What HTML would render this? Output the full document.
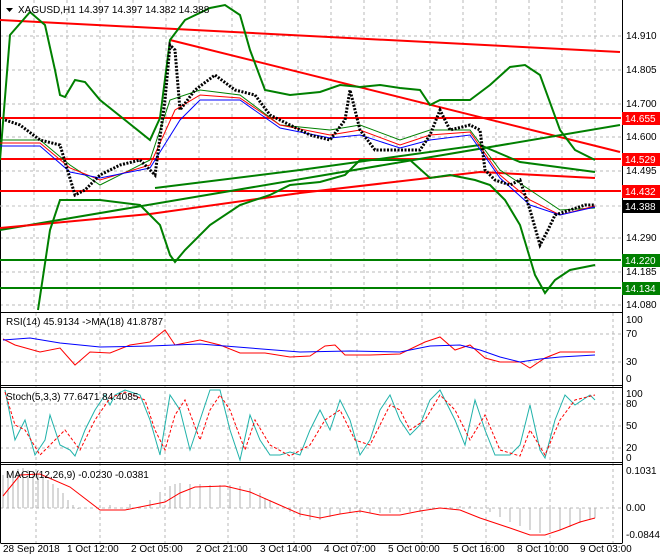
<!DOCTYPE html>
<html><head><meta charset="utf-8"><style>
body{margin:0;background:#fff;}
svg{display:block;font-family:"Liberation Sans",sans-serif;font-size:10px;}
</style></head><body>
<svg width="660" height="560" viewBox="0 0 660 560" xmlns="http://www.w3.org/2000/svg">
<rect width="660" height="560" fill="#fff"/>
<g stroke="#b8b8b8" stroke-dasharray="3,3" stroke-width="1">
<path d="M34 0V312M67 0V312M100 0V312M133 0V312M166 0V312M199 0V312M232 0V312M265 0V312M298 0V312M331 0V312M364 0V312M397 0V312M430 0V312M463 0V312M496 0V312M529 0V312M562 0V312M595 0V312"/>
<path d="M0 36H621M0 70H621M0 104H621M0 137H621M0 171H621M0 238H621M0 272H621M0 305H621"/>
<path d="M36 313V543M100 313V543M165 313V543M228 313V543M294 313V543M357 313V543M422 313V543M486 313V543M550 313V543M613 313V543"/>
<path d="M0 334H621M0 362H621M0 404H621M0 426H621M0 448H621M0 508H621"/>
</g>
<g fill="none" stroke="#000" stroke-width="1">
<path d="M0.5 312.5H622.5M0.5 385.5H622.5M0.5 387.5H622.5M0.5 462.5H622.5M0.5 464.5H622.5M0.5 543.5H622.5M622.5 0V543M0.5 0V543"/>
</g>
<g stroke-width="2" fill="none">
<path d="M0 118H621M0 159H621M0 191H621" stroke="#f00"/>
<path d="M0 260H621M0 288H621" stroke="#008000"/>
<path d="M0 206H621" stroke="#c0c0c0" stroke-width="1" stroke-dasharray="3,3"/>
<path d="M0 20L620 52" stroke="#f00"/>
<path d="M170 40L620 152" stroke="#f00"/>
<path d="M0 230L620 125" stroke="#008000"/>
<path d="M0 228L150 214L300 193L480 172L595 178" stroke="#f00"/>
<path d="M155 188L300 170L480 145L520 162L595 172" stroke="#008000"/>
<path d="M0 160L10 35L30 12L45 25L55 70L60 95L65 97L75 80L85 82L100 100L125 120L150 140L160 118L170 40L185 20L210 8L225 5L240 15L250 50L265 90L290 95L320 92L340 85L360 87L380 85L400 88L420 90L430 105L440 100L470 100L490 85L510 67L525 65L540 75L560 130L575 150L595 160" stroke="#008000"/>
<path d="M38 310L50 230L60 200L75 200L100 200L140 205L160 225L170 255L175 262L185 250L210 225L240 205L270 195L290 185L320 182L345 175L360 160L380 160L410 160L430 178L450 175L475 180L490 185L505 200L520 225L535 275L545 293L555 280L570 270L595 265" stroke="#008000"/>
<path d="M0 140L40 140L70 165L100 185L150 160L170 100L200 90L240 95L280 125L330 130L360 125L400 140L430 130L470 130L500 170L530 190L560 210L595 208" stroke="#008000" stroke-width="1"/>
<path d="M0 143L40 143L70 168L100 180L150 165L175 110L200 95L240 98L280 125L330 135L360 130L400 145L430 135L470 132L500 175L530 200L560 215L595 206" stroke="#f00" stroke-width="1"/>
<path d="M0 146L40 146L70 172L100 178L150 168L180 120L200 100L240 100L280 128L330 138L360 135L400 148L430 140L470 135L500 178L530 205L560 215L595 207" stroke="#00f" stroke-width="1"/>
<path d="M5 120L20 125L40 140L60 145L75 195L85 190L100 175L120 165L140 160L155 175L165 100L170 45L175 50L180 110L195 90L215 75L235 90L255 95L270 115L290 125L310 135L330 140L345 120L350 90L360 130L375 150L400 150L420 150L430 135L440 110L450 130L470 125L480 130L485 170L495 180L510 185L520 180L530 210L540 245L548 230L555 215L570 210L585 205L595 205" stroke="#000" stroke-width="3" stroke-dasharray="2,1.5"/>
</g>
<path d="M3 339L15 345L40 352L60 348L75 365L90 352L110 353L130 345L150 342L165 330L175 345L200 340L220 345L240 353L265 353L290 357L310 356L325 346L335 345L345 355L370 355L400 354L425 342L440 337L455 350L470 345L485 358L500 362L520 362L530 368L545 358L560 352L575 352L595 352" fill="none" stroke="#f00"/>
<path d="M3 340L30 338L60 343L100 347L150 346L200 344L250 348L300 352L350 351L400 352L430 346L460 345L480 350L500 357L520 362L540 359L560 357L595 355" fill="none" stroke="#00f"/>
<path d="M5 390L15 440L25 420L35 455L45 440L50 415L55 430L60 445L70 450L75 456L85 430L95 410L105 395L110 405L115 395L125 390L140 395L150 420L160 455L170 395L180 410L190 450L200 420L210 390L220 390L230 430L240 460L250 415L260 440L270 455L280 455L290 452L300 455L310 430L320 410L330 430L340 400L350 420L360 455L370 440L380 410L390 395L400 420L410 435L420 425L430 400L440 390L455 420L465 445L475 400L485 430L495 455L510 455L520 445L530 405L540 450L545 458L555 420L565 395L575 405L590 395L595 400" fill="none" stroke="#20b2aa"/>
<path d="M5 392L15 425L25 430L40 455L55 440L65 430L80 450L95 420L110 398L125 392L145 400L155 430L165 450L175 415L185 400L200 440L210 410L220 395L230 410L245 450L255 420L270 445L290 456L310 445L325 420L340 410L355 440L370 445L380 425L390 405L400 410L410 430L425 420L440 395L455 410L470 440L485 415L500 450L520 456L530 430L545 455L560 420L575 400L595 395" fill="none" stroke="#f00" stroke-dasharray="3,2"/>
<path d="M3 508V475M8 508V472M13 508V470M18 508V469M23 508V468M28 508V470M33 508V472M38 508V474M43 508V476M48 508V480M53 508V484M58 508V488M63 508V493M68 508V500M73 508V505M78 508V509M100 508V506M110 508V505M130 508V504M150 508V500M160 508V492M170 508V486M175 508V484M180 508V483M190 508V484M200 508V484M210 508V485M220 508V485M230 508V485M240 508V486M250 508V488M260 508V493M265 508V498M270 508V500M280 508V508M290 508V512M300 508V517M310 508V520M320 508V520M330 508V517M340 508V514M350 508V513M360 508V513M370 508V513M380 508V513M390 508V513M400 508V512M410 508V512M420 508V512M430 508V510M440 508V508M450 508V507M460 508V506M470 508V506M480 508V508M490 508V512M500 508V517M510 508V522M520 508V526M530 508V530M540 508V533M550 508V532M560 508V530M570 508V527M580 508V523M590 508V520M595 508V518" stroke="#b0b0b0" stroke-width="1"/>
<path d="M3 496L20 475L40 474L70 487L100 510L125 510L150 505L165 502L180 493L195 487L225 486L250 492L275 503L300 514L320 518L340 514L360 511L380 515L400 515L420 511L440 508L460 510L480 518L510 528L530 535L545 535L560 530L580 522L595 518" fill="none" stroke="#f00"/>
<g fill="#000">
<text x="626" y="39">14.910</text><text x="626" y="73">14.805</text><text x="626" y="107">14.700</text>
<text x="626" y="140">14.600</text><text x="626" y="174">14.495</text><text x="626" y="241">14.290</text>
<text x="626" y="275">14.185</text><text x="626" y="308">14.080</text>
<text x="626" y="323">100</text><text x="626" y="337">70</text><text x="626" y="365">30</text><text x="626" y="382">0</text>
<text x="626" y="397">100</text><text x="626" y="407">80</text><text x="626" y="429">50</text><text x="626" y="451">20</text><text x="626" y="461">0</text>
<text x="626" y="474">0.1031</text><text x="626" y="511">0.00</text><text x="626" y="538">-0.0844</text>
</g>
<g font-size="10">
<rect x="622" y="112" width="38" height="13" fill="#f00"/><text x="625" y="122" fill="#fff">14.655</text>
<rect x="622" y="153" width="38" height="13" fill="#f00"/><text x="625" y="163" fill="#fff">14.529</text>
<rect x="622" y="185" width="38" height="13" fill="#f00"/><text x="625" y="195" fill="#fff">14.432</text>
<rect x="622" y="200" width="38" height="13" fill="#000"/><text x="625" y="210" fill="#fff">14.388</text>
<rect x="622" y="254" width="38" height="13" fill="#008000"/><text x="625" y="264" fill="#fff">14.220</text>
<rect x="622" y="282" width="38" height="13" fill="#008000"/><text x="625" y="292" fill="#fff">14.134</text>
</g>
<path d="M6 8L13 8L9.5 12Z" fill="#000"/>
<text x="18" y="13" fill="#000">XAGUSD,H1  14.397 14.397 14.382 14.388</text>
<text x="6" y="325" fill="#000">RSI(14) 45.9134  -&gt;MA(18) 41.8787</text>
<text x="6" y="400" fill="#000">Stoch(5,3,3) 77.6471 84.4085</text>
<text x="6" y="478" fill="#000">MACD(12,26,9) -0.0230 -0.0381</text>
<g fill="#000">
<text x="3" y="552">28 Sep 2018</text><text x="67" y="552">1 Oct 12:00</text><text x="131" y="552">2 Oct 05:00</text>
<text x="196" y="552">2 Oct 21:00</text><text x="260" y="552">3 Oct 14:00</text><text x="324" y="552">4 Oct 07:00</text>
<text x="388" y="552">5 Oct 00:00</text><text x="453" y="552">5 Oct 16:00</text><text x="517" y="552">8 Oct 10:00</text>
<text x="580" y="552">9 Oct 03:00</text>
</g>
</svg>
</body></html>
